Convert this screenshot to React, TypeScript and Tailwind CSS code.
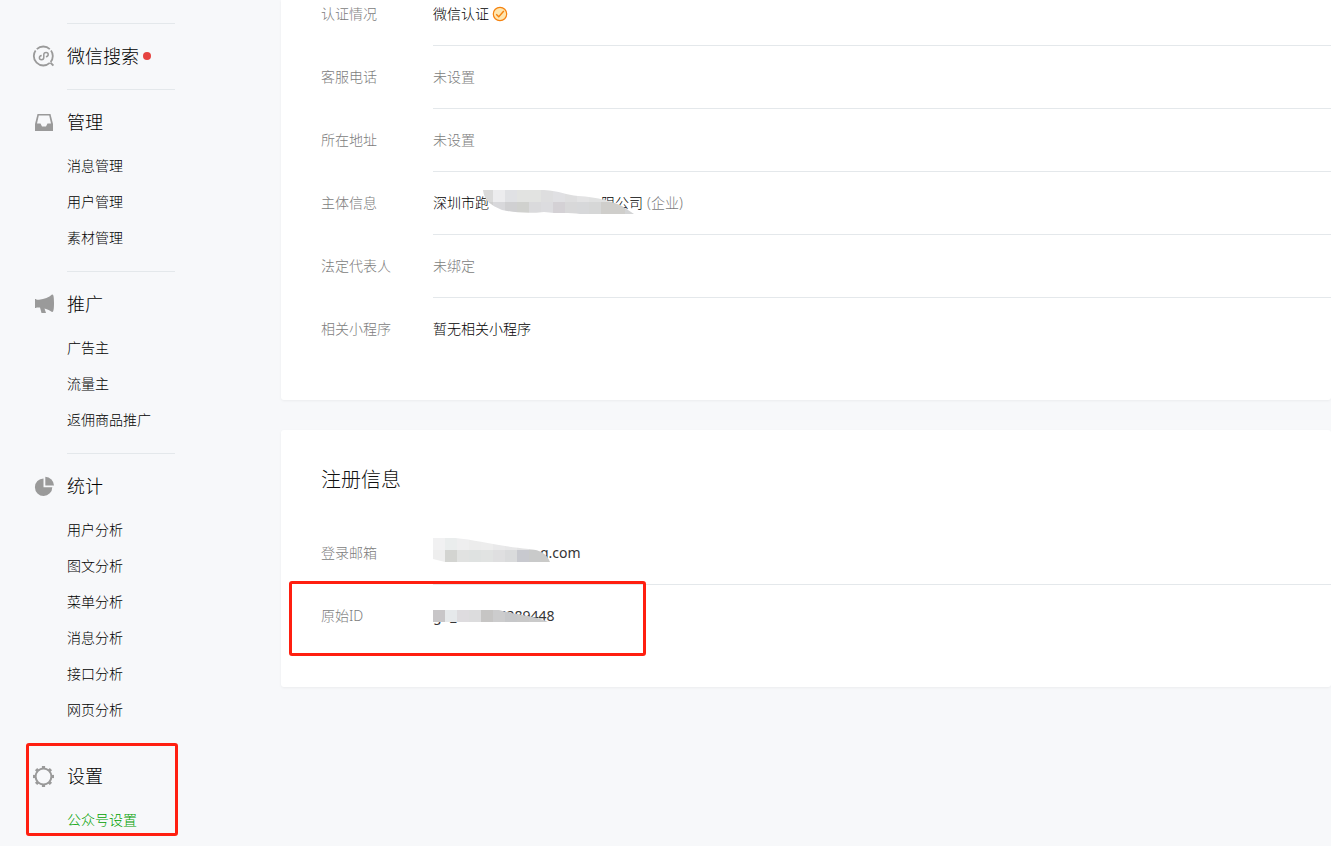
import type { ReactNode } from 'react';

type Section = { title: string; icon: ReactNode; items: string[]; dot?: boolean };

const SearchIcon = () => (
  <svg className="size-6" viewBox="0 0 24 24" fill="none" stroke="#9a9a9a" strokeWidth="1.8" aria-hidden="true">
    <circle cx="11.300" cy="12" r="9.500" pathLength="100" strokeDasharray="11 2 47 3 24 3 10 0" />
    <path d="m18.400 18.600 3 3" strokeWidth="2" />
    <path
      strokeWidth="1.500"
      d="M13.900 12.700c1.500-.2 2.300-1.100 2.300-2.300 0-1.300-1-2-2.100-2-1.400 0-2.300.9-2.300 2.200v2.900c0 1.300-.9 2.200-2.300 2.200-1.100 0-2.100-.7-2.100-2 0-1.200.8-2.100 2.300-2.300"
    />
  </svg>
);

const InboxIcon = () => (
  <svg className="size-6" viewBox="0 0 24 24" fill="#9a9a9a" aria-hidden="true">
    <path
      fillRule="evenodd"
      d="M5.500 4h13l2.500 10v7H3v-7l2.500-10Zm1.300 1.500L5 13.500h3.500l1.500 3h4l1.500-3H19l-1.800-8H6.800Z"
    />
  </svg>
);

const HornIcon = () => (
  <svg className="size-6" viewBox="0 0 24 24" fill="#9a9a9a" aria-hidden="true">
    <path d="M3 7h1.300v.8h2.700C12.500 7 17 5.300 20 2.500c1.500-.6 2 2 2 8.500s-.5 9.300-2 8.900c-2-1.400-4.500-2.700-7.500-3.400l1.500 4.500H9.500L8 15.500H4.300v.6H3V7Z" />
  </svg>
);

const PieIcon = () => (
  <svg className="size-6" viewBox="0 0 24 24" fill="#9a9a9a" aria-hidden="true">
    <path d="M11.500 4.500v8.700h8.800A8.700 8.700 0 1 1 11.500 4.500Z" />
    <path d="M13.300 2.800a8.900 8.900 0 0 1 8.700 8.700h-8.700V2.800Z" />
  </svg>
);

const GearIcon = () => (
  <svg className="size-6" viewBox="0 0 24 24" fill="none" stroke="#9a9a9a" aria-hidden="true">
    <circle cx="11.500" cy="12.500" r="7.900" strokeWidth="2" />
    <g strokeWidth="3.200">
      {[0, 45, 90, 135, 180, 225, 270, 315].map((a) => (
        <path key={a} d="M11.500 2v2.600" transform={`rotate(${a} 11.500 12.500)`} />
      ))}
    </g>
  </svg>
);

const sections: Section[] = [
  { title: '微信搜索', icon: <SearchIcon />, items: [], dot: true },
  { title: '管理', icon: <InboxIcon />, items: ['消息管理', '用户管理', '素材管理'] },
  { title: '推广', icon: <HornIcon />, items: ['广告主', '流量主', '返佣商品推广'] },
  {
    title: '统计',
    icon: <PieIcon />,
    items: ['用户分析', '图文分析', '菜单分析', '消息分析', '接口分析', '网页分析'],
  },
];

const Heading = ({ title, icon, dot }: { title: string; icon: ReactNode; dot?: boolean }) => (
  <h2 className="flex h-[26px] items-center text-lg font-light text-black">
    <span className="w-[35px] shrink-0">{icon}</span>
    {title}
    {dot && <span className="ml-1 size-2 rounded-full bg-[#e64340]" />}
  </h2>
);

const ItemList = ({ items, active }: { items: string[]; active?: boolean }) => (
  <ul className="mt-[13px] pl-[35px]">
    {items.map((t) => (
      <li key={t}>
        <a href="#" className={`block text-sm leading-9 ${active ? 'text-[#00a000]' : 'text-black'}`}>
          {t}
        </a>
      </li>
    ))}
  </ul>
);

const Row = ({
  label,
  children,
  muted,
  first,
  last,
}: {
  label: string;
  children: ReactNode;
  muted?: boolean;
  first?: boolean;
  last?: boolean;
}) => (
  <div className="flex text-sm leading-[22px]">
    <dt className={`w-28 shrink-0 pb-5 text-[#7c7c7c] ${first ? 'pt-[3px]' : 'pt-5'}`}>{label}</dt>
    <dd
      className={`flex-1 pb-5 ${first ? 'pt-[3px]' : 'pt-5'} ${last ? '' : 'border-b border-[#e4e8eb]'} ${
        muted ? 'text-[#7c7c7c]' : 'text-black'
      }`}
    >
      {children}
    </dd>
  </div>
);

const Mosaic = ({
  id,
  className,
  width,
  height,
  shape,
  cells,
  offset = 0,
}: {
  id: string;
  className: string;
  width: number;
  height: number;
  shape: string;
  cells: string[][];
  offset?: number;
}) => (
  <svg className={`absolute ${className}`} width={width} height={height} aria-hidden="true">
    <clipPath id={id}>
      <path d={shape} />
    </clipPath>
    <g clipPath={`url(#${id})`} shapeRendering="crispEdges">
      {cells.map((row, y) =>
        row.map((c, x) => <rect key={`${x}-${y}`} x={x * 12 + offset} y={y * 12} width="12" height="12" fill={c} />),
      )}
    </g>
  </svg>
);

export default function App() {
  return (
    <div className="flex min-h-screen items-start overflow-hidden bg-[#f7f8fa] font-['Noto_Sans','Noto_Sans_CJK_SC',sans-serif] font-light">
      <nav className="w-[281px] shrink-0 pt-[23px] pl-8" aria-label="功能">
        {sections.map((s) => (
          <section key={s.title} className="w-[143px]">
            <div className="ml-[35px] border-t border-[#e4e8eb]" />
            <div className={`pt-[19px] ${s.items.length ? 'pb-[15px]' : 'pb-5'}`}>
              <Heading title={s.title} icon={s.icon} dot={s.dot} />
              {s.items.length > 0 && <ItemList items={s.items} />}
            </div>
          </section>
        ))}
        <section className="relative w-[143px] pt-5">
          <Heading title="设置" icon={<GearIcon />} />
          <ItemList items={['公众号设置']} active />
          <div className="pointer-events-none absolute top-0 -right-[3px] -left-[6px] h-[93px] rounded-[3px] border-3 border-[#ff1f10]" />
        </section>
      </nav>

      <main className="min-w-0 flex-1">
        <section className="rounded-b-[3px] bg-white pb-10 pl-10 shadow-[0_1px_3px_rgba(0,0,0,0.05)]">
          <dl>
            <Row label="认证情况" first>
              <span className="flex items-center gap-[3px]">
                微信认证
                <svg className="size-4" viewBox="0 0 16 16" fill="none" stroke="#f5820f" aria-hidden="true">
                  <circle cx="8" cy="8" r="6.700" fill="#fee6b0" strokeWidth="1.200" />
                  <path d="m4.200 8.200 2.600 2.600 5-5.800" strokeWidth="1.400" />
                </svg>
              </span>
            </Row>
            <Row label="客服电话" muted>
              未设置
            </Row>
            <Row label="所在地址" muted>
              未设置
            </Row>
            <Row label="主体信息">
              <span className="relative flex">
                深圳市跑
                <span className="w-28" />
                限公司<span className="ml-1 text-[#7c7c7c]">(企业)</span>
                <Mosaic
                  id="m-company"
                  className="-top-[2px] left-[49px]"
                  width={154}
                  height={24}
                  offset={-1}
                  shape="M1 0H62C78 1 84 5 96 6C116 7 132 12 140 16L152 24H98C88 22 76 24 62 22C44 24 30 22 20 20C8 15 2 10 1 0Z"
                  cells={[
                    ['#dadada', '#ececee', '#e0e1e4', '#e2e3e1', '#e2e3e1', '#dededf', '#e0e0e3', '#dededf', '#e3e3e4', '#e0e1e1', '#e0e1e1', '#dedfdf', '#e0e0e0'],
                    ['#cfcfcf', '#d8d8db', '#d0d0d2', '#d0d1ce', '#dadadc', '#dcdcdf', '#d4d1d5', '#d8d8d9', '#d7d8da', '#d6d7d7', '#cfcecb', '#cfcecb', '#d3d4d5'],
                  ]}
                />
              </span>
            </Row>
            <Row label="法定代表人" muted>
              未绑定
            </Row>
            <Row label="相关小程序" last>
              暂无相关小程序
            </Row>
          </dl>
        </section>

        <section className="mt-[30px] rounded-[3px] bg-white pt-9 pb-10 pl-10 shadow-[0_1px_3px_rgba(0,0,0,0.05)]">
          <h3 className="mb-7 text-xl leading-7 font-light text-[#111]">注册信息</h3>
          <dl>
            <Row label="登录邮箱">
              <span className="relative flex font-normal text-[#353535]">
                <span className="w-[107px]" />
                q.com
                <Mosaic
                  id="m-mail"
                  className="-top-1 left-0"
                  width={118}
                  height={24}
                  shape="M0 0H22C45 2 62 8 96 11C108 12 114 16 117 24H12L0 21Z"
                  cells={[
                    ['#f1f1f2', '#eaeded', '#eeeeef', '#ececec', '#ededed', '#e9e9ea', '#e7e7e8', '#e3e3e4', '#dedede', '#cfcfcf'],
                    ['#eeeeee', '#d3d4d1', '#e1e2e1', '#dfe2e1', '#e1e3e2', '#dfdfe0', '#dadbdc', '#c8c9cf', '#c9caca', '#cacac8'],
                  ]}
                />
              </span>
            </Row>
            <div className="relative">
              <Row label="原始ID" last>
                <span className="relative flex font-normal text-[#353535]">
                  gh_
                  <span className="w-[42px]" />
                  5289448
                  <Mosaic
                    id="m-id"
                    className="top-[5px] left-0"
                    width={116}
                    height={12}
                    shape="M0 0H66C84 5 104 6 115 12H0Z"
                    cells={[['#c8c6c8', '#e6e9eb', '#dedcdf', '#dcdcdd', '#c6c5c4', '#cccccd', '#c6c7c9', '#c8c8c8', '#cacaca', '#cccccc']]}
                  />
                </span>
              </Row>
              <div className="pointer-events-none absolute -top-1 -left-8 h-[75px] w-[357px] rounded-[3px] border-3 border-[#ff1f10]" />
            </div>
          </dl>
        </section>
      </main>
    </div>
  );
}
